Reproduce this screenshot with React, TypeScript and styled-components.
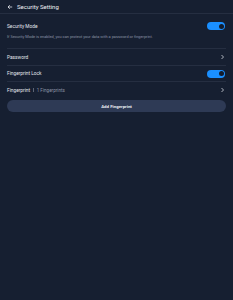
import styled, {createGlobalStyle} from "styled-components";

const GlobalStyle = createGlobalStyle`
  html, body {
    margin: 0;
    padding: 0;
    background: #161f31;
  }
  body {
    font-family: Roboto, "Noto Sans", "Liberation Sans", sans-serif;
    color: #e6e9ef;
  }
`;

const Page = styled.div`
  width: 233px;
  height: 300px;
  background: #161f31;
  display: flex;
  flex-direction: column;
  box-sizing: border-box;
`;

const Header = styled.div`
  height: 13px;
  display: flex;
  align-items: center;
  gap: 4px;
  padding: 0 7px;
  border-bottom: 1px solid #252e41;
`;

const HeaderTitle = styled.h1`
  margin: 0;
  font-size: 6px;
  font-weight: 400;
  color: #eef0f4;
`;

const Content = styled.div`
  display: flex;
  flex-direction: column;
  padding: 0 7px;
`;

const Row = styled.div<{ $h: number; $divider?: boolean }>`
  height: ${p => p.$h}px;
  display: flex;
  align-items: center;
  justify-content: space-between;
  border-bottom: ${p => (p.$divider ? "1px solid #252e41" : "none")};
  box-sizing: border-box;
`;

const Block = styled.div`
  display: flex;
  flex-direction: column;
  border-bottom: 1px solid #252e41;
  padding: 8px 0 9px;
  gap: 4px;
`;

const Label = styled.span`
  font-size: 4.8px;
  color: #e4e7ee;
`;

const SubLabel = styled.span`
  font-size: 4.6px;
  color: #8b93a5;
`;

const Description = styled.p`
  margin: 0;
  font-size: 3.9px;
  color: #8b93a5;
`;

const Inline = styled.div`
  display: flex;
  align-items: center;
  gap: 3px;
`;

const Sep = styled.span`
  width: 0.6px;
  height: 4px;
  background: #5d6576;
`;

const Toggle = styled.div`
  width: 18px;
  height: 8px;
  border-radius: 4px;
  background: #1a8fff;
  position: relative;
  flex-shrink: 0;
  margin-right: 1px;

  &::after {
    content: "";
    position: absolute;
    right: 1.5px;
    top: 1.5px;
    width: 5px;
    height: 5px;
    border-radius: 50%;
    background: #141c2c;
  }
`;

const Chevron = () => (
  <svg width="5" height="6" viewBox="0 0 5 6" style={{marginRight: 1}}>
    <path d="M1.5 1 L3.5 3 L1.5 5" fill="none" stroke="#d4d8e0" strokeWidth="0.8"/>
  </svg>
);

const BackArrow = () => (
  <svg width="6" height="6" viewBox="0 0 6 6">
    <path d="M5.2 3 H1 M2.8 1.2 L1 3 L2.8 4.8" fill="none" stroke="#e6e9ef" strokeWidth="0.8"/>
  </svg>
);

const AddButton = styled.button`
  margin-top: 2px;
  height: 12px;
  border: none;
  border-radius: 6px;
  background: #2e3a55;
  color: #e8ebf1;
  font-family: inherit;
  font-size: 4.4px;
  font-weight: 700;
  padding: 0;
`;

export default function App() {
  return (
    <>
      <GlobalStyle/>
      <Page>
        <Header>
          <BackArrow/>
          <HeaderTitle>Security Setting</HeaderTitle>
        </Header>
        <Content>
          <Block>
            <Row $h={8}>
              <Label>Security Mode</Label>
              <Toggle/>
            </Row>
            <Description>
              If Security Mode is enabled, you can protect your data with a password or fingerprint.
            </Description>
          </Block>
          <Row $h={17} $divider>
            <Label>Password</Label>
            <Chevron/>
          </Row>
          <Row $h={16} $divider>
            <Label>Fingerprint Lock</Label>
            <Toggle/>
          </Row>
          <Row $h={16}>
            <Inline>
              <Label>Fingerprint</Label>
              <Sep/>
              <SubLabel>1 Fingerprints</SubLabel>
            </Inline>
            <Chevron/>
          </Row>
          <AddButton>Add Fingerprint</AddButton>
        </Content>
      </Page>
    </>
  );
}
